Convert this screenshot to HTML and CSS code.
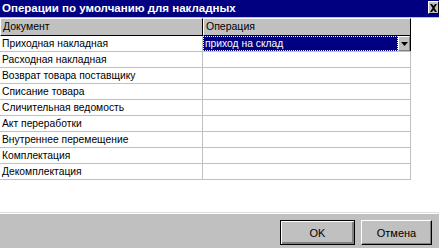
FILE: index.html
```html
<!DOCTYPE html>
<html>
<head>
<meta charset="utf-8">
<link rel="stylesheet" href="styles.css">
</head>
<body>
<div class="window">
  <div class="titlebar">
    <span class="title">Операции по умолчанию для накладных</span>
    <span class="close">
      <svg width="9" height="8" viewBox="0 0 9 8"><path d="M1 0h2l1.5 2L6 0h2L5.5 4 8 8H6L4.5 6 3 8H1l2.5-4z" fill="#000"/></svg>
    </span>
  </div>
  <div class="body">
    <div class="grid">
      <div class="hdr">
        <div class="hcell c1">Документ</div>
        <div class="hcell c2">Операция</div>
      </div>
      <div class="row">
        <div class="cell c1">Приходная накладная</div>
        <div class="cell c2 sel">
          <span class="seltext">приход на склад</span>
          <span class="drop"><svg width="7" height="4" viewBox="0 0 7 4"><path d="M0 0h7L3.5 4z" fill="#000"/></svg></span>
        </div>
      </div>
      <div class="row"><div class="cell c1">Расходная накладная</div><div class="cell c2"></div></div>
      <div class="row"><div class="cell c1">Возврат товара поставщику</div><div class="cell c2"></div></div>
      <div class="row"><div class="cell c1">Списание товара</div><div class="cell c2"></div></div>
      <div class="row"><div class="cell c1">Сличительная ведомость</div><div class="cell c2"></div></div>
      <div class="row"><div class="cell c1">Акт переработки</div><div class="cell c2"></div></div>
      <div class="row"><div class="cell c1">Внутреннее перемещение</div><div class="cell c2"></div></div>
      <div class="row"><div class="cell c1">Комплектация</div><div class="cell c2"></div></div>
      <div class="row"><div class="cell c1">Декомплектация</div><div class="cell c2"></div></div>
    </div>
  </div>
  <div class="footer">
    <button class="btn default">OK</button>
    <button class="btn">Отмена</button>
  </div>
</div>
</body>
</html>
```
FILE: styles.css
```css
* { box-sizing: border-box; }
html, body { margin: 0; padding: 0; }
body {
  width: 439px;
  height: 248px;
  overflow: hidden;
  font-family: "Liberation Sans", Arial, sans-serif;
  font-size: 10px;
  color: #000;
  background: #c0c0c0;
}
.window {
  width: 439px;
  height: 248px;
  display: flex;
  flex-direction: column;
}
.titlebar {
  height: 17px;
  background: #000080;
  color: #fff;
  display: flex;
  align-items: center;
  justify-content: space-between;
  padding: 0 0 0 2px;
  flex: none;
}
.title {
  font-weight: bold;
  font-size: 11.5px;
  line-height: 17px;
}
.close {
  width: 11px;
  height: 13px;
  align-self: flex-start;
  margin-top: 1px;
  background: #c0c0c0;
  border-top: 1px solid #fff;
  border-left: 1px solid #fff;
  border-right: 1px solid #000;
  border-bottom: 1px solid #000;
  display: flex;
  align-items: center;
  justify-content: center;
}
.body {
  flex: 1;
  background: #fff;
  border-top: 1px solid #c0c0c0;
  border-bottom: 1px solid #dcdcdc;
}
.grid {
  width: 411px;
}
.hdr {
  display: flex;
  height: 18px;
}
.hcell {
  background: #c0c0c0;
  border-top: 1px solid #fff;
  border-left: 1px solid #fff;
  border-right: 1px solid #000;
  border-bottom: 1px solid #000;
  padding-left: 2px;
  line-height: 15px;
  font-size: 10.5px;
}
.c1 { width: 203px; flex: none; }
.c2 { width: 208px; flex: none; }
.row {
  display: flex;
  height: 16px;
  border-bottom: 1px solid #c0c0c0;
}
.cell {
  line-height: 15px;
  padding-left: 2px;
  white-space: nowrap;
  font-size: 10.3px;
}
.cell.c1 { border-right: 1px solid #c0c0c0; }
.cell.c2 { border-right: 1px solid #c0c0c0; }
.cell.sel {
  display: flex;
  padding: 0;
  border-right: 1px solid #000;
}
.seltext {
  flex: 1;
  background: #000080;
  color: #fff;
  padding-left: 1px;
  line-height: 13px;
  border: 1px dotted #ffff80;
}
.drop {
  width: 12px;
  height: 15px;
  background: #c0c0c0;
  border-top: 1px solid #fff;
  border-left: 1px solid #fff;
  border-right: 1px solid #808080;
  border-bottom: 1px solid #808080;
  display: flex;
  align-items: center;
  justify-content: center;
}
.footer {
  height: 35px;
  flex: none;
  background: #c0c0c0;
  border-top: 1px solid #fff;
  display: flex;
  justify-content: flex-end;
  align-items: flex-start;
  gap: 6px;
  padding: 6px 7px 0 0;
}
.btn {
  width: 71px;
  height: 25px;
  font-family: "Liberation Sans", Arial, sans-serif;
  font-size: 11px;
  color: #000;
  background: #c0c0c0;
  border: 1px solid;
  border-color: #fff #000 #000 #fff;
  box-shadow: inset -1px -1px 0 #808080;
  padding: 0;
}
.btn.default {
  width: 75px;
  border: 1px solid #000;
  box-shadow: inset 1px 1px 0 #fff, inset -2px -2px 0 #808080;
}
```
